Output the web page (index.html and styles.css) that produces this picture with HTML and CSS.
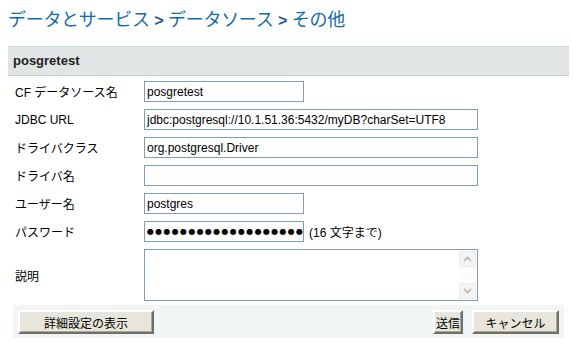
FILE: index.html
```html
<!DOCTYPE html>
<html lang="ja">
<head>
  <meta charset="UTF-8" />
  <title>その他</title>
  <link rel="stylesheet" href="styles.css">
</head>
<body>

  <h1 class="crumbs">
    <span>データとサービス</span> <b>&gt;</b> <span>データソース</span> <b>&gt;</b> <span>その他</span>
  </h1>

  <div class="panel">
    <div class="panel-head">posgretest</div>

    <!-- フォーム -->
    <div class="form">
      <label class="lbl">CF データソース名</label>
      <div class="field"><input class="txt short" type="text" value="posgretest"></div>

      <label class="lbl">JDBC URL</label>
      <div class="field"><input class="txt long" type="text" value="jdbc:postgresql://10.1.51.36:5432/myDB?charSet=UTF8"></div>

      <label class="lbl">ドライバクラス</label>
      <div class="field"><input class="txt long" type="text" value="org.postgresql.Driver"></div>

      <label class="lbl">ドライバ名</label>
      <div class="field"><input class="txt long" type="text" value=""></div>

      <label class="lbl">ユーザー名</label>
      <div class="field"><input class="txt short" type="text" value="postgres"></div>

      <label class="lbl">パスワード</label>
      <div class="field">
        <div class="txt short dots">●●●●●●●●●●●●●●●●●●●</div>
        <span class="hint">(16 文字まで)</span>
      </div>

      <label class="lbl">説明</label>
      <div class="field">
        <div class="memo">
          <textarea class="memo-text"></textarea>
          <div class="scroll">
            <div class="sbtn">
              <svg width="9" height="6" viewBox="0 0 9 6"><path d="M1 5 L4.5 1.5 L8 5" fill="none" stroke="#b5b5b5" stroke-width="1.6"/></svg>
            </div>
            <div class="sbtn">
              <svg width="9" height="6" viewBox="0 0 9 6"><path d="M1 1 L4.5 4.5 L8 1" fill="none" stroke="#b5b5b5" stroke-width="1.6"/></svg>
            </div>
          </div>
        </div>
      </div>
    </div>

    <div class="actions">
      <button class="btn wide">詳細設定の表示</button>
      <div class="right">
        <button class="btn send">送信</button>
        <button class="btn cancel">キャンセル</button>
      </div>
    </div>
  </div>

</body>
</html>
```

FILE: styles.css
```css
body {
  margin: 0;
  font-family: "Liberation Sans", "Noto Sans CJK JP", sans-serif;
  font-size: 12px;
  color: #000;
  background: #fff;
}

.crumbs {
  margin: 0;
  padding: 5px 8px 0;
  height: 46px;
  box-sizing: border-box;
  font-size: 18px;
  font-weight: normal;
  letter-spacing: -0.3px;
  color: #136ca6;
  white-space: nowrap;
}
.crumbs b {
  font-family: "Liberation Sans", sans-serif;
  color: #1b5a8a;
  font-size: 16px;
}

.panel {
  margin: 0 4px 0 8px;
}
.panel-head {
  height: 28px;
  line-height: 28px;
  padding-left: 5px;
  background: #e1e5e6;
  border-top: 1px solid #c3d6d9;
  border-bottom: 1px solid #c3d6d9;
  font-size: 13px;
  font-weight: bold;
  color: #222;
}

/* フォーム */
.form {
  display: grid;
  grid-template-columns: 136px 1fr;
  row-gap: 7px;
  padding-top: 5px;
  align-items: center;
}
.lbl {
  padding-left: 7px;
  font-size: 12px;
}
.field {
  display: flex;
  align-items: center;
  gap: 5px;
}
.txt {
  box-sizing: border-box;
  height: 21px;
  margin: 0;
  padding: 0 2px;
  border: 1px solid #7f9db9;
  font-family: "Liberation Sans", sans-serif;
  font-size: 12px;
  color: #000;
  background: #fff;
  outline: none;
}
.short {
  width: 160px;
}
.long {
  width: 334px;
}
.dots {
  line-height: 19px;
  font-family: "DejaVu Sans", sans-serif;
  font-size: 8px;
  letter-spacing: 1.3px;
  overflow: hidden;
  white-space: nowrap;
  padding-left: 2px;
}
.hint {
  font-size: 12px;
}

.memo {
  box-sizing: border-box;
  display: flex;
  width: 334px;
  height: 52px;
  border: 1px solid #7f9db9;
  background: #fff;
}
.memo-text {
  flex: 1;
  border: none;
  resize: none;
  outline: none;
  margin: 0;
}
.scroll {
  width: 17px;
  display: flex;
  flex-direction: column;
  justify-content: space-between;
  padding: 1px 1px 1px 0;
  background: #fcfcfb;
}
.sbtn {
  box-sizing: border-box;
  height: 16px;
  display: flex;
  align-items: center;
  justify-content: center;
  border: 1px solid #e8ebee;
  border-radius: 2px;
  background: #f4f4f4;
}

.actions {
  display: flex;
  justify-content: space-between;
  margin: 4px 5px 0;
  padding: 5px 5px 4px;
  background: #f2f5f6;
}
.right {
  display: flex;
  gap: 9px;
}
.btn {
  height: 24px;
  padding: 0 4px;
  font-family: "Liberation Sans", "Noto Sans CJK JP", sans-serif;
  font-size: 12px;
  white-space: nowrap;
  color: #000;
  background: #e8e6dc;
  border: 2px solid;
  border-color: #fff #716f64 #716f64 #fff;
  box-shadow: inset -1px -1px 0 #aca899;
}
.wide {
  width: 136px;
}
.send {
  width: 30px;
  padding: 0;
}
.cancel {
  width: 87px;
}
```
